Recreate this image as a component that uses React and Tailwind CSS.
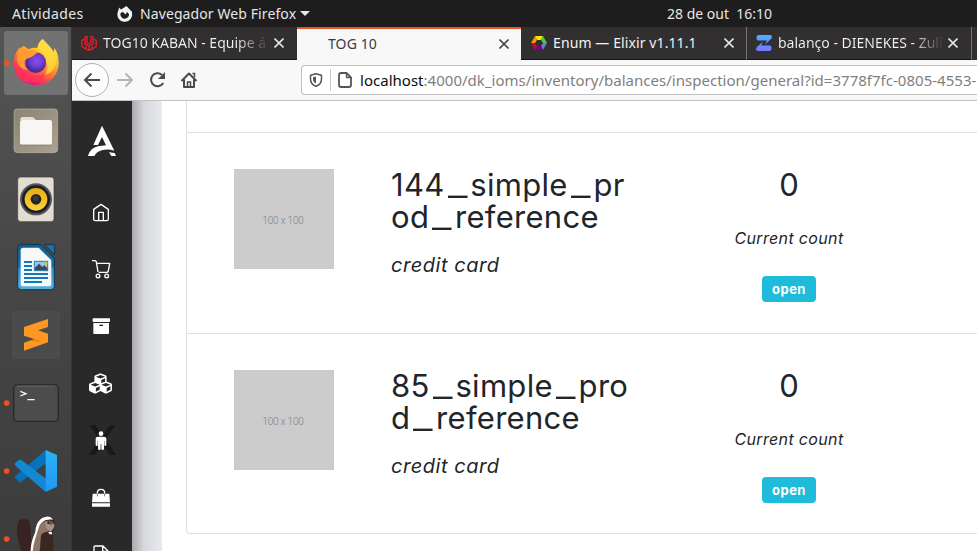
import React from "react";
import { FaCubes } from "react-icons/fa";

const UI = "font-['Noto_Sans','Open_Sans',sans-serif]";

function TopBar() {
  return (
    <header className="flex h-[27px] w-full shrink-0 items-center bg-[#1d1d1d] text-[14px] leading-none whitespace-nowrap text-[#e6e6e6]">
      <span className="ml-3 w-[105px] tracking-[0.35px]">Atividades</span>
      <svg className="h-4 w-4 shrink-0" viewBox="0 0 16 16">
        <path d="M3.500 4.500A5.800 5.800 0 1 0 13 6" fill="none" stroke="#f2f2f2" strokeWidth="3.200" />
        <path d="M8 1l1.500-1 5.500 6-2 3-3-3-1.500 2.500L6 6 3 7 1 6.500 2 1.500l2 2z" fill="#f2f2f2" />
      </svg>
      <span className="ml-[7px] w-[160px] tracking-[0.1px]">Navegador Web Firefox</span>
      <svg className="h-[5px] w-[10px] shrink-0" viewBox="0 0 10 5"><path d="M0 0h10L5 5z" fill="#e6e6e6" /></svg>
      <span className="ml-[357px] whitespace-pre">28 de out  16:10</span>
    </header>
  );
}

function DockItem({ y, running, children }) {
  return (
    <svg className="h-[68px] w-[72px] shrink-0" viewBox={`0 ${y} 216 204`}>
      {children}
      {running && <circle cx="20" cy={y + 102} r="8.500" fill="#e95420" />}
    </svg>
  );
}

function Dock() {
  return (
    <aside className="flex w-[72px] shrink-0 flex-col overflow-hidden border-r border-[#353535] bg-linear-to-b from-[#545454] via-[#464646] to-[#3c3c3c] pt-[2px]">
      <svg width="0" height="0" className="absolute">
        <defs>
          <linearGradient id="fx" x1=".8" y1="0" x2=".25" y2="1"><stop offset="0" stopColor="#fff44f" /><stop offset=".35" stopColor="#ffbd2e" /><stop offset=".62" stopColor="#ff6a35" /><stop offset=".85" stopColor="#f5246a" /><stop offset="1" stopColor="#d8187c" /></linearGradient>
          <radialGradient id="globe" cx=".55" cy=".4"><stop offset="0" stopColor="#8a4cf4" /><stop offset=".6" stopColor="#6d3fd0" /><stop offset="1" stopColor="#4c2b9e" /></radialGradient>
          <linearGradient id="files" x1="0" y1="0" x2="1" y2="1"><stop offset="0" stopColor="#8b8373" /><stop offset="1" stopColor="#aaa28e" /></linearGradient>
          <linearGradient id="doc" x1="0" y1="0" x2="0" y2="1"><stop offset="0" stopColor="#0d5f93" /><stop offset=".5" stopColor="#1373ad" /><stop offset=".52" stopColor="#2d8fc4" /><stop offset="1" stopColor="#58b1dc" /></linearGradient>
          <linearGradient id="cone" x1="0" y1="0" x2="0" y2="1"><stop offset="0" stopColor="#e8ad10" /><stop offset="1" stopColor="#fbd33b" /></linearGradient>
          <linearGradient id="vs" x1="0" y1="0" x2="0" y2="1"><stop offset="0" stopColor="#2cb3f5" /><stop offset="1" stopColor="#2196f3" /></linearGradient>
        </defs>
      </svg>
      <DockItem y={87} running>
        <rect x="12" y="93" width="192" height="192" rx="9" fill="#727272" />
        <path d="M128 117c-9 7-14 15-16 27-8-2-19-1-26 4l-16-11-4 11-9-4c-9 13-16 27-16 45 0 38 29 66 67 66 39 0 68-28 68-67 0-20-5-34-13-44l-2 12c-5-11-17-20-33-39z" fill="url(#fx)" />
        <path d="M128 117c-9 7-14 18-16 30 14 4 25 18 26 35 9 15 4 32-8 44 22-4 37-20 38-42-1-27-20-47-40-67z" fill="#ffdc3e" opacity=".8" />
        <circle cx="107" cy="188" r="31" fill="url(#globe)" />
        <path d="M57 148l11-9 17 13c8-4 21-3 28 6-10 5-13 11-24 15l-11 5c-10 9-5 25 8 33-24-2-36-18-34-39z" fill="#ff9b32" />
        <path d="M42 176c4 22 20 42 41 48 20 7 42 4 57-8-13 26-38 35-61 30-23-6-38-27-37-70z" fill="#ff3654" opacity=".75" />
      </DockItem>
      <DockItem y={21}>
        <rect x="41" y="58" width="133" height="131" rx="11" fill="#333" />
        <rect x="42" y="57" width="131" height="131" rx="10" fill="url(#files)" stroke="#c0b9a8" strokeWidth="2" />
        <path d="M61 88q0-7 7-7h26q6 0 9 4l5 6h-47z" fill="#e2ded4" />
        <path d="M60 97q0-7 7-7h82q7 0 7 7v60q0 8-8 8H68q-8 0-8-8z" fill="#f7f6f4" />
        <path d="M64 165h88" stroke="#716a5b" strokeWidth="2" />
      </DockItem>
      <DockItem y={225}>
        <rect x="53" y="261" width="109" height="134" rx="9" fill="#e2ddd1" stroke="#3b3b3b" strokeWidth="2" />
        <circle cx="108" cy="328" r="48" fill="#55565d" /><circle cx="108" cy="328" r="42" fill="#1c1d2b" />
        <circle cx="108" cy="328" r="34" fill="url(#cone)" /><circle cx="108" cy="328" r="16" fill="#252525" /><circle cx="107" cy="325" r="8" fill="#3c3c3c" />
      </DockItem>
      <DockItem y={9}>
        <path d="M64 43h58l41 42v84q0 10-10 10H64q-11 0-11-10V54q0-11 11-11z" fill="url(#doc)" stroke="#17344a" strokeWidth="3" />
        <path d="M133 44h31v30z" fill="#1672aa" stroke="#17344a" strokeWidth="3" />
        <path d="M70 53h46l38 38v70q0 8-7 8H70q-8 0-8-8V61q0-8 8-8z" fill="#f6f8fa" />
        <path d="M72 96h24M72 108h24M72 120h24M72 132h72M72 144h72M72 156h54" stroke="#0f79bb" strokeWidth="6" />
        <rect x="103" y="94" width="40" height="28" fill="#8bc8ea" stroke="#1b80bd" strokeWidth="3" /><path d="M132 95h10v10z" fill="#f2c200" />
        <path d="M105 121v-8l12-12 10 10 6-5 9 9v6z" fill="#45484b" />
      </DockItem>
      <DockItem y={213}>
        <rect x="36" y="243" width="144" height="144" rx="8" fill="#4b4b4b" />
        <path d="M72 291l72-24v24l-30 10 30 10v26l-72 25v-24l31-11-31-10z" fill="#ff9820" />
        <path d="M88 333l15-6 24 8z" fill="#d97a0c" opacity=".7" />
      </DockItem>
      <DockItem y={-3} running>
        <rect x="41" y="45" width="134" height="109" rx="11" fill="#4c4c4c" stroke="#292929" strokeWidth="4" />
        <path d="M50 48h116" stroke="#7b7b7b" strokeWidth="2" />
        <path d="M61 64l17 7-17 7M82 89h22" fill="none" stroke="#f5f5f5" strokeWidth="4" />
      </DockItem>
      <DockItem y={201} running>
        <path d="M45 323q-2-3 2-6l90-77 3 38-76 57q-4 3-7 0z" fill="#0a72b8" />
        <path d="M45 284q-2-3 2-6l10-8q4-2 7 0l76 58-3 38-90-78z" fill="#1389d4" />
        <path d="M137 240l34 15v95l-34 16z" fill="url(#vs)" />
      </DockItem>
      <DockItem y={405} running>
        <path d="M66 550c-6-22-15-42-15-72 0-22 7-32 21-32 15 0 21 14 20 36 0 20 2 40 6 68z" fill="#37231f" />
        <path d="M95 550c-3-28 5-52 12-68 2-26 14-43 34-43 16 0 25 11 25 27-1 10-4 15-10 19 5 22 6 45 3 65z" fill="#3a2722" />
        <path d="M97 550c1-30 8-46 11-62 3-20 13-34 30-34 10 0 17 4 20 10-1 10-10 13-13 20-9 4-20 4-22 14-3 18 0 36-7 52z" fill="#8d7666" />
        <path d="M92 545c0-28 8-44 14-60 2-27 14-43 33-45 9-1 16 3 20 9-20-4-39 6-43 25-6 20-16 44-18 71z" fill="#fff" />
        <path d="M135 456c11-5 25-2 29 9-2 12-8 15-13 22l-13-14z" fill="#aa9280" /><path d="M144 486l12 1 0 6-7 0z" fill="#fff" /><path d="M140 452h14l10 10-14 2z" fill="#6b564a" /><circle cx="145" cy="459" r="3" fill="#1d1412" />
      </DockItem>
    </aside>
  );
}

function Close({ dark }) {
  return (
    <svg className={dark ? "h-[10px] w-[10px] shrink-0 text-[#4a4a4a]" : "h-[10px] w-[10px] shrink-0 text-[#e4e4e4]"} viewBox="0 0 10 10">
      <path d="M.5.5l9 9m0-9l-9 9" stroke="currentColor" strokeWidth="1.600" />
    </svg>
  );
}

function TabStrip() {
  return (
    <div className="flex h-[33px] shrink-0 bg-[#322f30] text-[14px] leading-none whitespace-nowrap text-[#f2f2f2]">
      <div className="flex w-[225px] shrink-0 items-center border-b border-[#151515] pl-[9px]">
        <svg className="h-4 w-4 shrink-0" viewBox="0 0 16 16" fill="none" stroke="#ee1c25" strokeWidth="1.300">
          <path d="M6 .8v6.700l2 1.200 2-1.200V.8M6 1L3.800 2.300v6.500L8 11l4.200-2.200V2.300L10 1M3.800 4L.8 5.500v6L5 14v-3M12.200 4l3 1.500v6L11 14v-3M5 14l3 1.200 3-1.200M8 11v4" />
        </svg>
        <span className="ml-[6px] w-[167px] bg-linear-to-r from-[#f2f2f2] from-80% to-[#322f30] bg-clip-text py-1 text-transparent">TOG10 KABAN - Equipe á</span>
        <span className="ml-[4px]"><Close /></span>
      </div>
      <div className="flex w-[224px] shrink-0 items-center border-t-2 border-[#e95420] bg-[#f8f8f8] pb-[2px] pl-[31px] text-[#3b3b3b]">
        <span className="w-[171px] tracking-[0.1px]">TOG 10</span><Close dark />
      </div>
      <div className="flex w-[226px] shrink-0 items-center border-r border-b border-r-[#77747a] border-b-[#151515] pl-[10px]">
        <svg className="h-4 w-4 shrink-0" viewBox="0 0 16 16">
          <path d="M4 1h8L10 5H6z" fill="#f5e800" /><path d="M12 1l4 7h-4l-2-3z" fill="#4dc94d" /><path d="M16 8l-4 7-2-4 2-3z" fill="#6b7bc4" /><path d="M12 15H4l2-4h4z" fill="#780096" /><path d="M4 15L0 8h4l2 3z" fill="#c4093b" /><path d="M0 8l4-7 2 4-2 3z" fill="#f09a00" />
        </svg>
        <span className="ml-[6px] w-[171px] tracking-[0.1px]">Enum — Elixir v1.11.1</span><Close />
      </div>
      <div className="flex w-[225px] shrink-0 items-center border-r border-b border-r-[#77747a] border-b-[#151515] pl-[9px]">
        <svg className="h-4 w-4 shrink-0" viewBox="0 0 16 16">
          <defs><linearGradient id="zu" x1="0" y1="0" x2="0" y2="1"><stop stopColor="#50adff" /><stop offset="1" stopColor="#7877fc" /></linearGradient></defs>
          <path d="M2 0h12q2 0 2 2 0 1-1 2L9 9.500l2-4H2Q.5 5.500.5 3T2 0zm12 16H2q-2 0-2-2 0-1 1-2l6-5.500-2 4h9q1.500 0 1.500 2.500T14 16z" fill="url(#zu)" />
        </svg>
        <span className="ml-[6px] w-[167px] bg-linear-to-r from-[#f2f2f2] from-80% to-[#322f30] bg-clip-text py-1 text-transparent">balanço - DIENEKES - Zuli</span>
        <span className="ml-[3px]"><Close /></span>
      </div>
    </div>
  );
}

function NavBar() {
  return (
    <div className="flex h-[41px] shrink-0 items-center border-b border-[#c2c2c2] bg-[#f8f8f8]">
      <svg className="h-10 w-[229px] shrink-0" viewBox="0 0 229 40" fill="none" stroke="#4a4a4a" strokeWidth="2">
        <circle cx="20" cy="20" r="16.500" fill="#fdfdfd" stroke="#b0b0b0" strokeWidth="1" />
        <path d="M28 20H13m6.500-6.500L13 20l6.500 6.500" />
        <path d="M45 20h15m-6.500-6.500L60 20l-6.500 6.500" stroke="#b5b5b5" />
        <path d="M90 15a6.500 6.500 0 1 0 1.200 8" /><path d="M93 12v7h-7z" fill="#4a4a4a" stroke="none" />
        <path d="M109.500 21L117 13.500l7.500 7.500M112 19.500V27h10v-7.500" strokeLinejoin="round" /><path d="M115.500 27v-5h3v5" strokeWidth="1.500" /><path d="M120.500 13.500h2v4" strokeWidth="1.500" />
      </svg>
      <div className="flex h-[30px] flex-1 items-center overflow-hidden rounded-l border border-r-0 border-[#c0c0c0] bg-white pl-[7px]">
        <svg className="h-[14px] w-[14px] shrink-0" viewBox="0 0 14 14" fill="none" stroke="#555" strokeWidth="1.500">
          <path d="M7 .8l5.500 1.400V6c0 3.500-2 6-5.500 7.300C3.500 12 1.500 9.500 1.500 6V2.200z" strokeLinejoin="round" /><path d="M7 3.500v7C5 9.500 4 8 4 6V4.200z" fill="#555" stroke="none" />
        </svg>
        <span className="ml-[7px] h-[22px] w-px bg-[#c8c8c8]" />
        <svg className="ml-[7px] h-4 w-[14px] shrink-0" viewBox="0 0 14 16" fill="none" stroke="#555" strokeWidth="1.800" strokeLinejoin="round">
          <path d="M3 1h5.500L13 5.500V13q0 2-2 2H3q-2 0-2-2V3q0-2 2-2z" /><path d="M8.500 1.500V5.500H13" strokeWidth="1.400" />
        </svg>
        <span className="ml-2 text-[15px] leading-none tracking-[0.02px] whitespace-nowrap text-[#808080]"><span className="text-[#0c0c0d]">localhost</span>:4000/dk_ioms/inventory/balances/inspection/general?id=3778f7fc-0805-4553-</span>
      </div>
    </div>
  );
}

function MenuIcon({ y, children }) {
  return <svg className="h-[57px] w-[60px] shrink-0" viewBox={`216 ${y} 180 171`} fill="none" stroke="#fff" strokeWidth="4" strokeLinejoin="round">{children}</svg>;
}

function Sidebar() {
  return (
    <nav className="z-10 flex w-[60px] shrink-0 flex-col overflow-hidden bg-[#292929]">
      <svg className="h-[83px] w-[60px] shrink-0" viewBox="216 33 180 249" fill="#fff">
        <path d="M306 107l37 75c-14-5-27-4-38-1-10 3-17 8-22 17h-19c5-20 20-30 42-31l12-1-12-25-12 24h-14z" />
        <path d="M327 187l17 2 4 9h-14z" />
      </svg>
      <MenuIcon y={282}><path d="M281 358l22-15 22 15v29q0 5-5 5h-34q-5 0-5-5z" /><path d="M296 391v-24h14v24" /></MenuIcon>
      <MenuIcon y={33}>
        <path d="M276 92h9q3 0 4 4l5 30M289 100h40l-4 23q-1 4-5 4h-24" /><circle cx="294" cy="138" r="5.500" /><circle cx="320" cy="138" r="5.500" />
      </MenuIcon>
      <MenuIcon y={204}><g fill="#fff" stroke="none"><rect x="278" y="265" width="52" height="11" rx="2" /><path d="M280 279h47v30q0 3-3 3h-41q-3 0-3-3z" /></g><path d="M298 286h11" stroke="#292929" /></MenuIcon>
      <div className="flex h-[57px] shrink-0 items-center justify-center pr-[3px] text-white"><FaCubes className="h-[23px] w-[23px]" /></div>
      <MenuIcon y={126}>
        <path d="M268 165h18l22 31 21-31h17l-29 43 32 47h-19l-23-34-22 34h-18l31-47z" fill="#191919" stroke="none" />
        <g fill="#fff" stroke="none"><circle cx="303" cy="191" r="7" /><path d="M295 200h16q8 0 8 7v18q0 3-3 3t-3-3v-13h-1v24q0 4-4 4t-4-4v-14h-2v14q0 4-4 4t-4-4v-24h-1v13q0 3-3 3t-3-3v-18q0-7 8-7z" /></g>
      </MenuIcon>
      <MenuIcon y={297}><path d="M278 371h50l2 26h-54zM276 400h54v10h-54z" fill="#fff" stroke="none" /><path d="M292 371v-2q0-11 11-11t11 11v2" /><path d="M292 371v8M314 371v8" stroke="#292929" strokeWidth="2" /></MenuIcon>
      <MenuIcon y={468}><path d="M285 528h24l15 15v40h-39q-3 0-3-3v-49q0-3 3-3zM308 529v15h15" /></MenuIcon>
    </nav>
  );
}

const Bar = () => <span className="mx-[8px] inline-block scale-x-[2] font-['Roboto',sans-serif] text-[22px] leading-none font-bold tracking-normal">_</span>;

function Product({ lines }) {
  return (
    <li className="flex h-[201px] border-t border-[#dddfe1] pt-9 pl-[47px] last:h-[200px]">
      <div className="flex size-[100px] shrink-0 items-center justify-center bg-[#cccccc] pt-[2px] pr-[2px] font-['Roboto',sans-serif] text-[10px] font-light tracking-[-0.2px] text-[#808080]">100 x 100</div>
      <div className="ml-[57px] w-[262px] shrink-0">
        <h2 className="text-[31px] leading-8 tracking-[0.3px] whitespace-nowrap">
          {lines.map((line) => (
            <span key={line} className="block h-8">
              {line.split("_").map((part, i) => <React.Fragment key={i}>{i > 0 && <Bar />}{part}</React.Fragment>)}
            </span>
          ))}
        </h2>
        <p className="mt-[20px] text-[20px] leading-6 tracking-[0.55px] italic">credit card</p>
      </div>
      <div className="flex w-[272px] shrink-0 flex-col items-center">
        <span className="text-[31px] leading-8">0</span>
        <span className="mt-[25px] text-[16px] leading-6 tracking-[0.35px] italic">Current count</span>
        <button className="mt-[26px] h-[26px] w-[54px] rounded-[4px] bg-[#1ebbda] text-[13px] leading-none font-bold tracking-[0.45px] text-white">open</button>
      </div>
    </li>
  );
}

export default function App() {
  return (
    <div className={`flex h-[551px] w-[977px] flex-col overflow-hidden ${UI}`}>
      <TopBar />
      <div className="flex min-h-0 flex-1">
        <Dock />
        <div className="flex min-w-0 flex-1 flex-col overflow-hidden">
          <TabStrip />
          <NavBar />
          <div className="flex min-h-0 flex-1 overflow-hidden bg-white">
            <Sidebar />
            <div className="w-[30px] shrink-0 bg-linear-to-r from-[#aaabae] via-[#d7d8dc] via-40% to-[#e9eaef]" />
            <main className="flex-1 overflow-hidden bg-white pl-6 font-['Inter',sans-serif] text-[#212529]">
              <ul className="w-[900px] rounded-b border border-t-0 border-[#dddfe1] pt-[31px]">
                <Product lines={["144_simple_pr", "od_reference"]} />
                <Product lines={["85_simple_pro", "d_reference"]} />
              </ul>
            </main>
          </div>
        </div>
      </div>
    </div>
  );
}
